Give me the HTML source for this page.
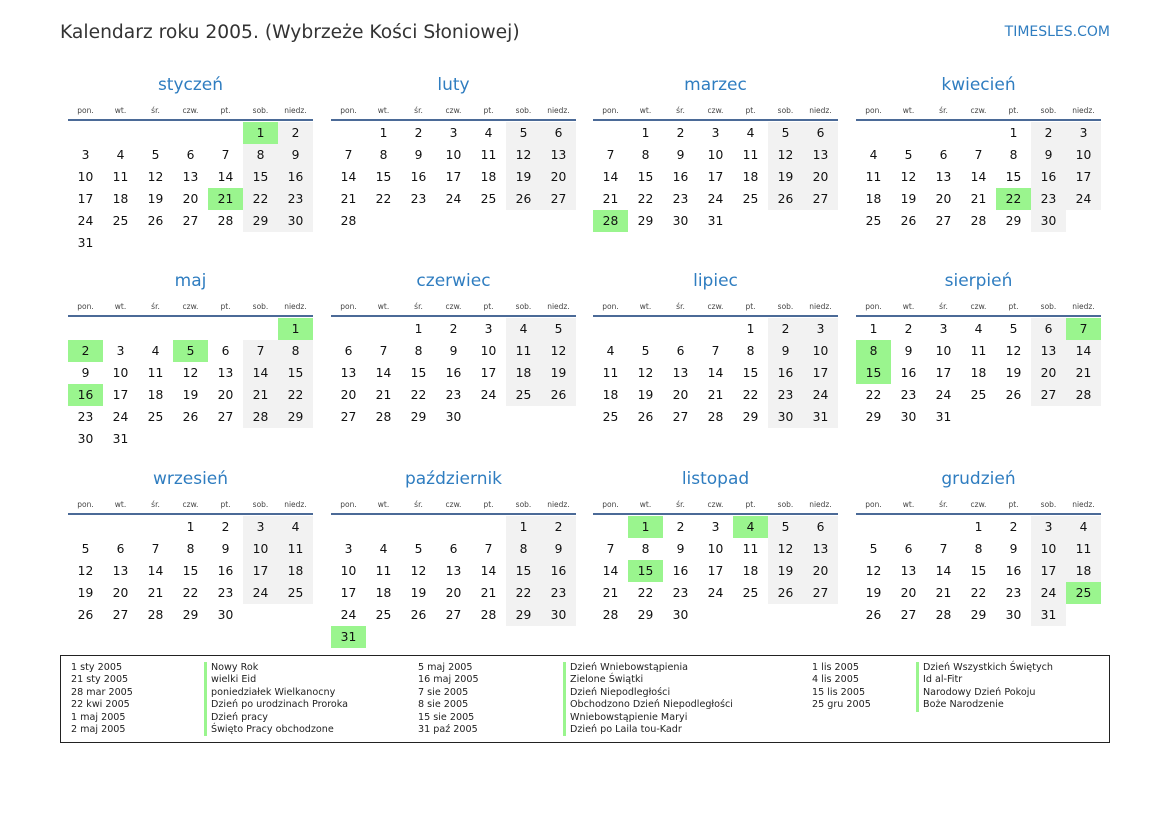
<!DOCTYPE html>
<html><head><meta charset="utf-8">
<style>
body{margin:0;width:1169px;height:827px;background:#fff;position:relative;font-family:"DejaVu Sans","Liberation Sans",sans-serif;overflow:hidden}
.t{position:absolute;left:60px;top:20px;font-size:18.7px;color:#333;line-height:26px;white-space:nowrap}
.s{position:absolute;right:59px;top:23px;font-size:14px;color:#2f7dc0;line-height:18px}
.m{position:absolute;width:245px}
.m h2{margin:0;height:20px;line-height:20px;font-weight:normal;font-size:17px;color:#2f7dc0;text-align:center}
.hd{display:grid;grid-template-columns:repeat(7,35px);height:10px;margin-top:11px;font-size:7.5px;color:#444;text-align:center;line-height:10px}
.ln{height:2px;background:#4b6a97;margin-top:3px}
.g{display:grid;grid-template-columns:repeat(7,35px);grid-auto-rows:22px;font-size:12.3px;color:#111;text-align:center;line-height:22px;margin-top:1px}
.g i{font-style:normal}
.g .w{background:#f2f2f2}
.g .h{background:#9af58e}
.lg{position:absolute;left:60px;top:655px;width:1048px;height:86px;border:1px solid #222;font-size:9.6px;color:#222;line-height:12.4px}
.c{position:absolute;top:6px;white-space:nowrap}
.b{border-left:3px solid #9af58e;padding-left:4px}
</style></head><body>
<div class="t">Kalendarz roku 2005. (Wybrzeże Kości Słoniowej)</div>
<div class="s">TIMESLES.COM</div>

<div class="m" style="left:68px;top:75px"><h2>styczeń</h2><div class="hd"><span>pon.</span><span>wt.</span><span>śr.</span><span>czw.</span><span>pt.</span><span>sob.</span><span>niedz.</span></div><div class="ln"></div>
<div class="g"><i class="h" style="grid-column-start:6">1</i><i class="w">2</i><i>3</i><i>4</i><i>5</i><i>6</i><i>7</i><i class="w">8</i><i class="w">9</i><i>10</i><i>11</i><i>12</i><i>13</i><i>14</i><i class="w">15</i><i class="w">16</i><i>17</i><i>18</i><i>19</i><i>20</i><i class="h">21</i><i class="w">22</i><i class="w">23</i><i>24</i><i>25</i><i>26</i><i>27</i><i>28</i><i class="w">29</i><i class="w">30</i><i>31</i></div></div>

<div class="m" style="left:331px;top:75px"><h2>luty</h2><div class="hd"><span>pon.</span><span>wt.</span><span>śr.</span><span>czw.</span><span>pt.</span><span>sob.</span><span>niedz.</span></div><div class="ln"></div>
<div class="g"><i style="grid-column-start:2">1</i><i>2</i><i>3</i><i>4</i><i class="w">5</i><i class="w">6</i><i>7</i><i>8</i><i>9</i><i>10</i><i>11</i><i class="w">12</i><i class="w">13</i><i>14</i><i>15</i><i>16</i><i>17</i><i>18</i><i class="w">19</i><i class="w">20</i><i>21</i><i>22</i><i>23</i><i>24</i><i>25</i><i class="w">26</i><i class="w">27</i><i>28</i></div></div>

<div class="m" style="left:593px;top:75px"><h2>marzec</h2><div class="hd"><span>pon.</span><span>wt.</span><span>śr.</span><span>czw.</span><span>pt.</span><span>sob.</span><span>niedz.</span></div><div class="ln"></div>
<div class="g"><i style="grid-column-start:2">1</i><i>2</i><i>3</i><i>4</i><i class="w">5</i><i class="w">6</i><i>7</i><i>8</i><i>9</i><i>10</i><i>11</i><i class="w">12</i><i class="w">13</i><i>14</i><i>15</i><i>16</i><i>17</i><i>18</i><i class="w">19</i><i class="w">20</i><i>21</i><i>22</i><i>23</i><i>24</i><i>25</i><i class="w">26</i><i class="w">27</i><i class="h">28</i><i>29</i><i>30</i><i>31</i></div></div>

<div class="m" style="left:856px;top:75px"><h2>kwiecień</h2><div class="hd"><span>pon.</span><span>wt.</span><span>śr.</span><span>czw.</span><span>pt.</span><span>sob.</span><span>niedz.</span></div><div class="ln"></div>
<div class="g"><i style="grid-column-start:5">1</i><i class="w">2</i><i class="w">3</i><i>4</i><i>5</i><i>6</i><i>7</i><i>8</i><i class="w">9</i><i class="w">10</i><i>11</i><i>12</i><i>13</i><i>14</i><i>15</i><i class="w">16</i><i class="w">17</i><i>18</i><i>19</i><i>20</i><i>21</i><i class="h">22</i><i class="w">23</i><i class="w">24</i><i>25</i><i>26</i><i>27</i><i>28</i><i>29</i><i class="w">30</i></div></div>

<div class="m" style="left:68px;top:271px"><h2>maj</h2><div class="hd"><span>pon.</span><span>wt.</span><span>śr.</span><span>czw.</span><span>pt.</span><span>sob.</span><span>niedz.</span></div><div class="ln"></div>
<div class="g"><i class="h" style="grid-column-start:7">1</i><i class="h">2</i><i>3</i><i>4</i><i class="h">5</i><i>6</i><i class="w">7</i><i class="w">8</i><i>9</i><i>10</i><i>11</i><i>12</i><i>13</i><i class="w">14</i><i class="w">15</i><i class="h">16</i><i>17</i><i>18</i><i>19</i><i>20</i><i class="w">21</i><i class="w">22</i><i>23</i><i>24</i><i>25</i><i>26</i><i>27</i><i class="w">28</i><i class="w">29</i><i>30</i><i>31</i></div></div>

<div class="m" style="left:331px;top:271px"><h2>czerwiec</h2><div class="hd"><span>pon.</span><span>wt.</span><span>śr.</span><span>czw.</span><span>pt.</span><span>sob.</span><span>niedz.</span></div><div class="ln"></div>
<div class="g"><i style="grid-column-start:3">1</i><i>2</i><i>3</i><i class="w">4</i><i class="w">5</i><i>6</i><i>7</i><i>8</i><i>9</i><i>10</i><i class="w">11</i><i class="w">12</i><i>13</i><i>14</i><i>15</i><i>16</i><i>17</i><i class="w">18</i><i class="w">19</i><i>20</i><i>21</i><i>22</i><i>23</i><i>24</i><i class="w">25</i><i class="w">26</i><i>27</i><i>28</i><i>29</i><i>30</i></div></div>

<div class="m" style="left:593px;top:271px"><h2>lipiec</h2><div class="hd"><span>pon.</span><span>wt.</span><span>śr.</span><span>czw.</span><span>pt.</span><span>sob.</span><span>niedz.</span></div><div class="ln"></div>
<div class="g"><i style="grid-column-start:5">1</i><i class="w">2</i><i class="w">3</i><i>4</i><i>5</i><i>6</i><i>7</i><i>8</i><i class="w">9</i><i class="w">10</i><i>11</i><i>12</i><i>13</i><i>14</i><i>15</i><i class="w">16</i><i class="w">17</i><i>18</i><i>19</i><i>20</i><i>21</i><i>22</i><i class="w">23</i><i class="w">24</i><i>25</i><i>26</i><i>27</i><i>28</i><i>29</i><i class="w">30</i><i class="w">31</i></div></div>

<div class="m" style="left:856px;top:271px"><h2>sierpień</h2><div class="hd"><span>pon.</span><span>wt.</span><span>śr.</span><span>czw.</span><span>pt.</span><span>sob.</span><span>niedz.</span></div><div class="ln"></div>
<div class="g"><i>1</i><i>2</i><i>3</i><i>4</i><i>5</i><i class="w">6</i><i class="h">7</i><i class="h">8</i><i>9</i><i>10</i><i>11</i><i>12</i><i class="w">13</i><i class="w">14</i><i class="h">15</i><i>16</i><i>17</i><i>18</i><i>19</i><i class="w">20</i><i class="w">21</i><i>22</i><i>23</i><i>24</i><i>25</i><i>26</i><i class="w">27</i><i class="w">28</i><i>29</i><i>30</i><i>31</i></div></div>

<div class="m" style="left:68px;top:469px"><h2>wrzesień</h2><div class="hd"><span>pon.</span><span>wt.</span><span>śr.</span><span>czw.</span><span>pt.</span><span>sob.</span><span>niedz.</span></div><div class="ln"></div>
<div class="g"><i style="grid-column-start:4">1</i><i>2</i><i class="w">3</i><i class="w">4</i><i>5</i><i>6</i><i>7</i><i>8</i><i>9</i><i class="w">10</i><i class="w">11</i><i>12</i><i>13</i><i>14</i><i>15</i><i>16</i><i class="w">17</i><i class="w">18</i><i>19</i><i>20</i><i>21</i><i>22</i><i>23</i><i class="w">24</i><i class="w">25</i><i>26</i><i>27</i><i>28</i><i>29</i><i>30</i></div></div>

<div class="m" style="left:331px;top:469px"><h2>październik</h2><div class="hd"><span>pon.</span><span>wt.</span><span>śr.</span><span>czw.</span><span>pt.</span><span>sob.</span><span>niedz.</span></div><div class="ln"></div>
<div class="g"><i class="w" style="grid-column-start:6">1</i><i class="w">2</i><i>3</i><i>4</i><i>5</i><i>6</i><i>7</i><i class="w">8</i><i class="w">9</i><i>10</i><i>11</i><i>12</i><i>13</i><i>14</i><i class="w">15</i><i class="w">16</i><i>17</i><i>18</i><i>19</i><i>20</i><i>21</i><i class="w">22</i><i class="w">23</i><i>24</i><i>25</i><i>26</i><i>27</i><i>28</i><i class="w">29</i><i class="w">30</i><i class="h">31</i></div></div>

<div class="m" style="left:593px;top:469px"><h2>listopad</h2><div class="hd"><span>pon.</span><span>wt.</span><span>śr.</span><span>czw.</span><span>pt.</span><span>sob.</span><span>niedz.</span></div><div class="ln"></div>
<div class="g"><i class="h" style="grid-column-start:2">1</i><i>2</i><i>3</i><i class="h">4</i><i class="w">5</i><i class="w">6</i><i>7</i><i>8</i><i>9</i><i>10</i><i>11</i><i class="w">12</i><i class="w">13</i><i>14</i><i class="h">15</i><i>16</i><i>17</i><i>18</i><i class="w">19</i><i class="w">20</i><i>21</i><i>22</i><i>23</i><i>24</i><i>25</i><i class="w">26</i><i class="w">27</i><i>28</i><i>29</i><i>30</i></div></div>

<div class="m" style="left:856px;top:469px"><h2>grudzień</h2><div class="hd"><span>pon.</span><span>wt.</span><span>śr.</span><span>czw.</span><span>pt.</span><span>sob.</span><span>niedz.</span></div><div class="ln"></div>
<div class="g"><i style="grid-column-start:4">1</i><i>2</i><i class="w">3</i><i class="w">4</i><i>5</i><i>6</i><i>7</i><i>8</i><i>9</i><i class="w">10</i><i class="w">11</i><i>12</i><i>13</i><i>14</i><i>15</i><i>16</i><i class="w">17</i><i class="w">18</i><i>19</i><i>20</i><i>21</i><i>22</i><i>23</i><i class="w">24</i><i class="h">25</i><i>26</i><i>27</i><i>28</i><i>29</i><i>30</i><i class="w">31</i></div></div>

<div class="lg">
<div class="c" style="left:10px">1 sty 2005<br>21 sty 2005<br>28 mar 2005<br>22 kwi 2005<br>1 maj 2005<br>2 maj 2005</div>
<div class="c b" style="left:143px">Nowy Rok<br>wielki Eid<br>poniedziałek Wielkanocny<br>Dzień po urodzinach Proroka<br>Dzień pracy<br>Święto Pracy obchodzone</div>
<div class="c" style="left:357px">5 maj 2005<br>16 maj 2005<br>7 sie 2005<br>8 sie 2005<br>15 sie 2005<br>31 paź 2005</div>
<div class="c b" style="left:502px">Dzień Wniebowstąpienia<br>Zielone Świątki<br>Dzień Niepodległości<br>Obchodzono Dzień Niepodległości<br>Wniebowstąpienie Maryi<br>Dzień po Laila tou-Kadr</div>
<div class="c" style="left:751px">1 lis 2005<br>4 lis 2005<br>15 lis 2005<br>25 gru 2005</div>
<div class="c b" style="left:855px">Dzień Wszystkich Świętych<br>Id al-Fitr<br>Narodowy Dzień Pokoju<br>Boże Narodzenie</div>
</div>
</body></html>
